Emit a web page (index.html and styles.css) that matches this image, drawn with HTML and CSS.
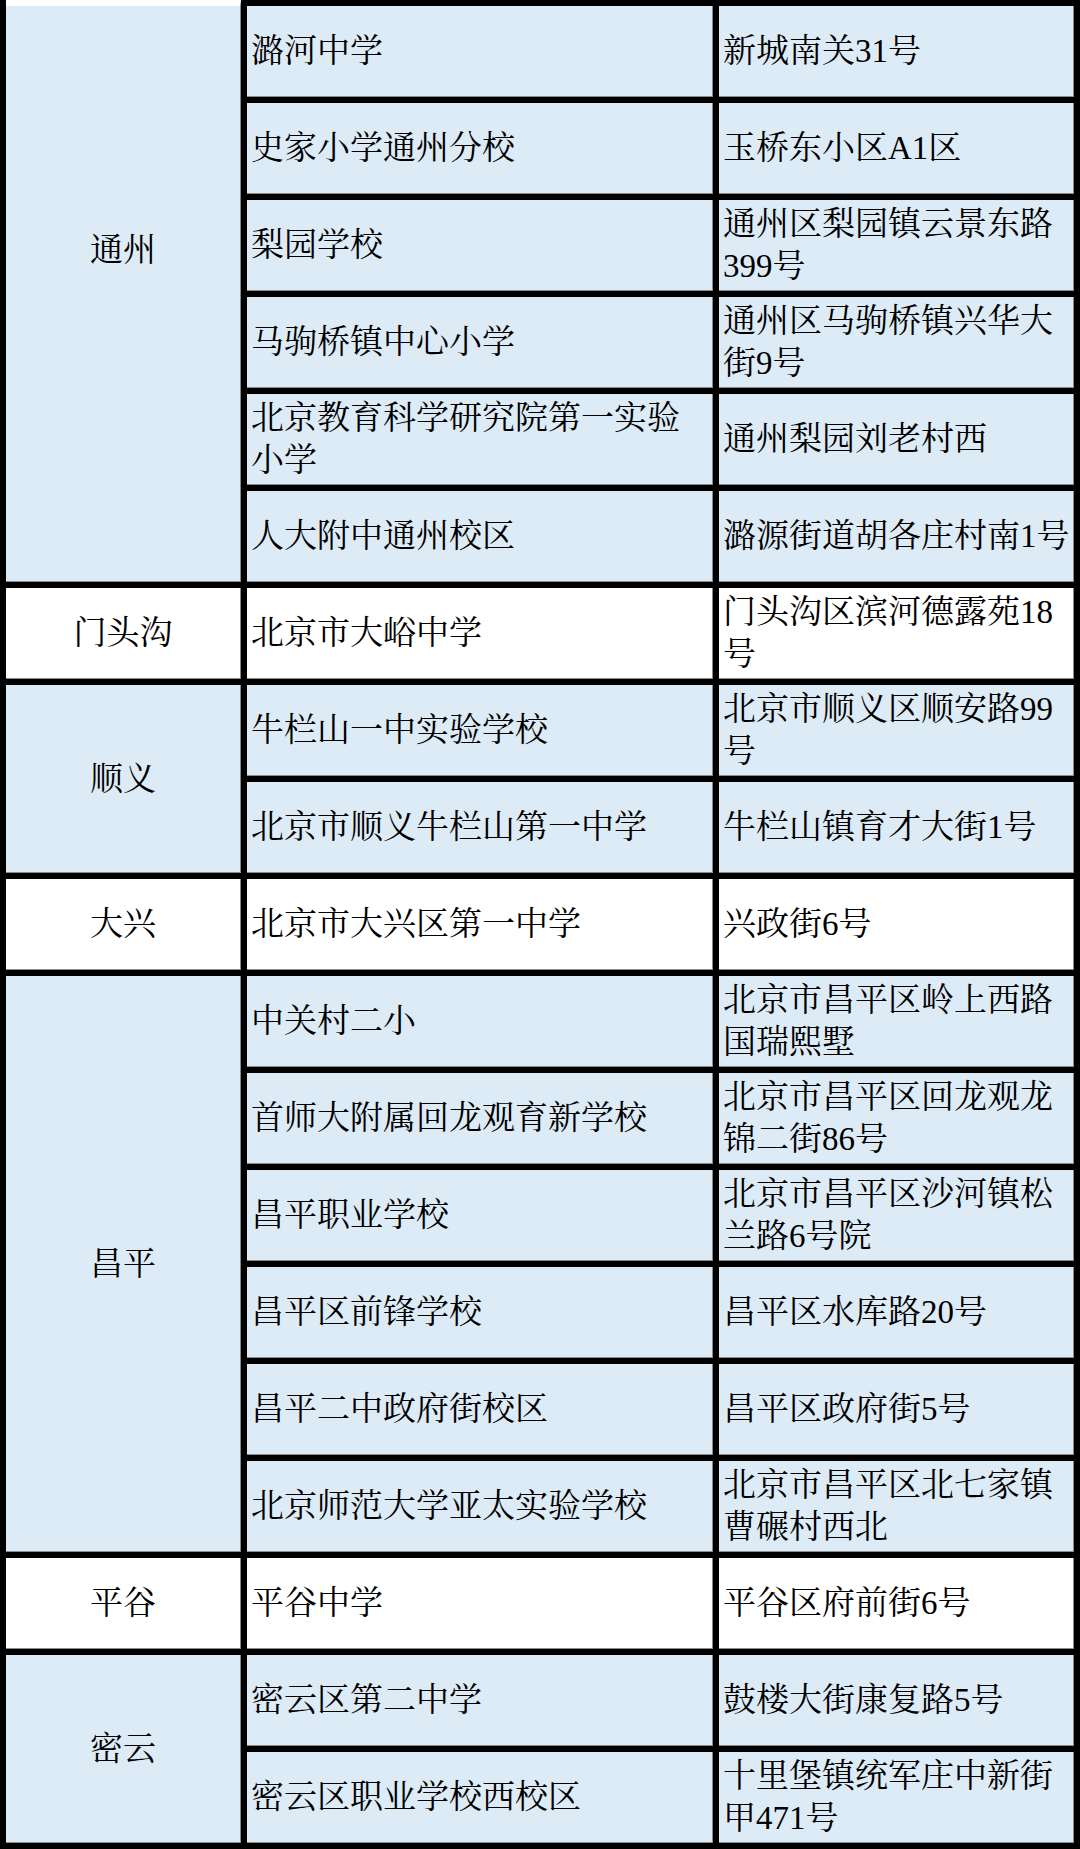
FILE: index.html
```html
<!DOCTYPE html>
<html lang="zh-CN">
<head>
<meta charset="utf-8">
<title>学校列表</title>
<link rel="stylesheet" href="styles.css">
</head>
<body>
<div class="sheet">
  <div class="cell region blue span6 cut"><span>通州</span></div>
  <div class="cell school blue"><span>潞河中学</span></div>
  <div class="cell addr blue"><span>新城南关31号</span></div>
  <div class="cell school blue"><span>史家小学通州分校</span></div>
  <div class="cell addr blue"><span>玉桥东小区A1区</span></div>
  <div class="cell school blue"><span>梨园学校</span></div>
  <div class="cell addr blue"><span>通州区梨园镇云景东路399号</span></div>
  <div class="cell school blue"><span>马驹桥镇中心小学</span></div>
  <div class="cell addr blue"><span>通州区马驹桥镇兴华大街9号</span></div>
  <div class="cell school blue"><span>北京教育科学研究院第一实验小学</span></div>
  <div class="cell addr blue"><span>通州梨园刘老村西</span></div>
  <div class="cell school blue"><span>人大附中通州校区</span></div>
  <div class="cell addr blue"><span>潞源街道胡各庄村南1号</span></div>

  <div class="cell region white span1"><span>门头沟</span></div>
  <div class="cell school white"><span>北京市大峪中学</span></div>
  <div class="cell addr white"><span>门头沟区滨河德露苑18号</span></div>

  <div class="cell region blue span2"><span>顺义</span></div>
  <div class="cell school blue"><span>牛栏山一中实验学校</span></div>
  <div class="cell addr blue"><span>北京市顺义区顺安路99号</span></div>
  <div class="cell school blue"><span>北京市顺义牛栏山第一中学</span></div>
  <div class="cell addr blue"><span>牛栏山镇育才大街1号</span></div>

  <div class="cell region white span1"><span>大兴</span></div>
  <div class="cell school white"><span>北京市大兴区第一中学</span></div>
  <div class="cell addr white"><span>兴政街6号</span></div>

  <div class="cell region blue span6"><span>昌平</span></div>
  <div class="cell school blue"><span>中关村二小</span></div>
  <div class="cell addr blue"><span>北京市昌平区岭上西路国瑞熙墅</span></div>
  <div class="cell school blue"><span>首师大附属回龙观育新学校</span></div>
  <div class="cell addr blue"><span>北京市昌平区回龙观龙锦二街86号</span></div>
  <div class="cell school blue"><span>昌平职业学校</span></div>
  <div class="cell addr blue"><span>北京市昌平区沙河镇松兰路6号院</span></div>
  <div class="cell school blue"><span>昌平区前锋学校</span></div>
  <div class="cell addr blue"><span>昌平区水库路20号</span></div>
  <div class="cell school blue"><span>昌平二中政府街校区</span></div>
  <div class="cell addr blue"><span>昌平区政府街5号</span></div>
  <div class="cell school blue"><span>北京师范大学亚太实验学校</span></div>
  <div class="cell addr blue"><span>北京市昌平区北七家镇曹碾村西北</span></div>

  <div class="cell region white span1"><span>平谷</span></div>
  <div class="cell school white"><span>平谷中学</span></div>
  <div class="cell addr white"><span>平谷区府前街6号</span></div>

  <div class="cell region blue span2"><span>密云</span></div>
  <div class="cell school blue"><span>密云区第二中学</span></div>
  <div class="cell addr blue"><span>鼓楼大街康复路5号</span></div>
  <div class="cell school blue"><span>密云区职业学校西校区</span></div>
  <div class="cell addr blue"><span>十里堡镇统军庄中新街甲471号</span></div>
</div>
</body>
</html>
```

FILE: styles.css
```css
html, body {
  margin: 0;
  padding: 0;
  background: #ffffff;
}

.sheet {
  width: 1080px;
  box-sizing: border-box;
  display: grid;
  grid-template-columns: 235px 466px 355px;
  grid-auto-rows: 91px;
  gap: 6px;
  padding: 6px;
  background: #000000;
  font-family: "Liberation Serif", "Noto Serif CJK SC", "Noto Sans CJK SC", serif;
  font-size: 33px;
  line-height: 42px;
  color: #000000;
}

.cell {
  display: flex;
  align-items: center;
  box-sizing: border-box;
  padding: 0 0 0 4px;
  border-right: 1px solid #8a8a8a;
  border-bottom: 1px solid #8a8a8a;
  overflow: hidden;
}

.blue { background: #ddebf7; }
.white { background: #ffffff; }

.region {
  grid-column: 1;
  justify-content: center;
  text-align: center;
  padding: 0;
}
.school { grid-column: 2; }
.addr { grid-column: 3; }

.span1 { grid-row: span 1; }
.span2 { grid-row: span 2; }
.span6 { grid-row: span 6; }

/* the 通州 cell continues above the visible area */
.cut {
  margin-top: -6px;
  border-top: 6px solid #ffffff;
  padding-bottom: 88px;
}
```
